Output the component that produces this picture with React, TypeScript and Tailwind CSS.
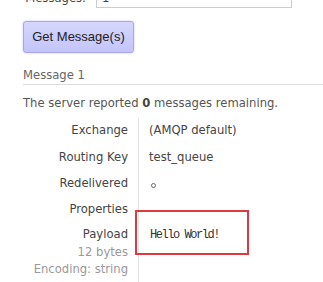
import React from "react";

export default function App() {
  const rows: [string, React.ReactNode][] = [
    ["Exchange", "(AMQP default)"],
    ["Routing Key", "test_queue"],
    [
      "Redelivered",
      <span className="inline-block w-[5px] h-[5px] rounded-full border border-[#666] ml-[2px] mt-[3px]" />,
    ],
    ["Properties", ""],
  ];
  return (
    <div
      className="w-[323px] h-[282px] overflow-hidden bg-white relative text-[11.6px] text-[#444]"
      style={{ fontFamily: '"DejaVu Sans", Verdana, sans-serif' }}
    >
      <div className="flex items-start -mt-[14px] h-[22px]">
        <div className="w-[88px] text-right leading-[22px] text-[#444] pr-[2px] pt-[1px]">Messages:</div>
        <div className="ml-[8px] w-[196px] h-[22px] border border-[#ccc] bg-white pl-[5px] leading-[22px] text-[#444]">1</div>
      </div>
      <div className="pl-[23px] mt-[13px]">
        <button
          className="h-[32px] w-[111px] rounded-[3px] border border-[#a8a8e8] bg-gradient-to-b from-[#d6d6fd] to-[#c4c4fa] text-[13px] text-[#222] shadow-[0_0_2px_rgba(140,140,230,0.6)]"
          style={{ fontFamily: '"Liberation Sans", Arial, sans-serif' }}
        >
          Get Message(s)
        </button>
      </div>
      <div className="ml-[23px] mt-[14px] h-[17px] leading-[17px] text-[#666] border-b border-[#ddd] box-content">
        Message 1
      </div>
      <div className="ml-[23px] mt-[11px] leading-[14px] text-[#555]">
        The server reported <b className="font-bold text-[#444]">0</b> messages remaining.
      </div>
      <div className="mt-[8px] ml-[23px]">
        {rows.map(([k, v]) => (
          <div key={k} className="flex h-[26.3px]">
            <div className="w-[116px] shrink-0 text-right pr-[10px] border-r border-[#e2e2e2] flex items-center justify-end">
              {k}
            </div>
            <div className="pl-[10px] flex items-center">{v}</div>
          </div>
        ))}
        <div className="flex">
          <div className="w-[116px] shrink-0 text-right pr-[10px] border-r border-[#e2e2e2] pt-[3px] leading-[17.5px] pb-[20px]">
            <div className="text-[#444]">Payload</div>
            <div className="text-[#999]">12 bytes</div>
            <div className="text-[#999]">Encoding: string</div>
          </div>
          <div className="pl-[11px] pt-[3px] leading-[17.5px]">
            <span
              className="text-[12px] tracking-[-1.45px] text-[#333]"
              style={{ fontFamily: '"Liberation Mono", "Courier New", monospace' }}
            >
              Hello World!
            </span>
          </div>
        </div>
      </div>
      <div className="absolute left-[135px] top-[210px] w-[114px] h-[45px] border-2 border-[#dd3a40]" />
    </div>
  );
}
